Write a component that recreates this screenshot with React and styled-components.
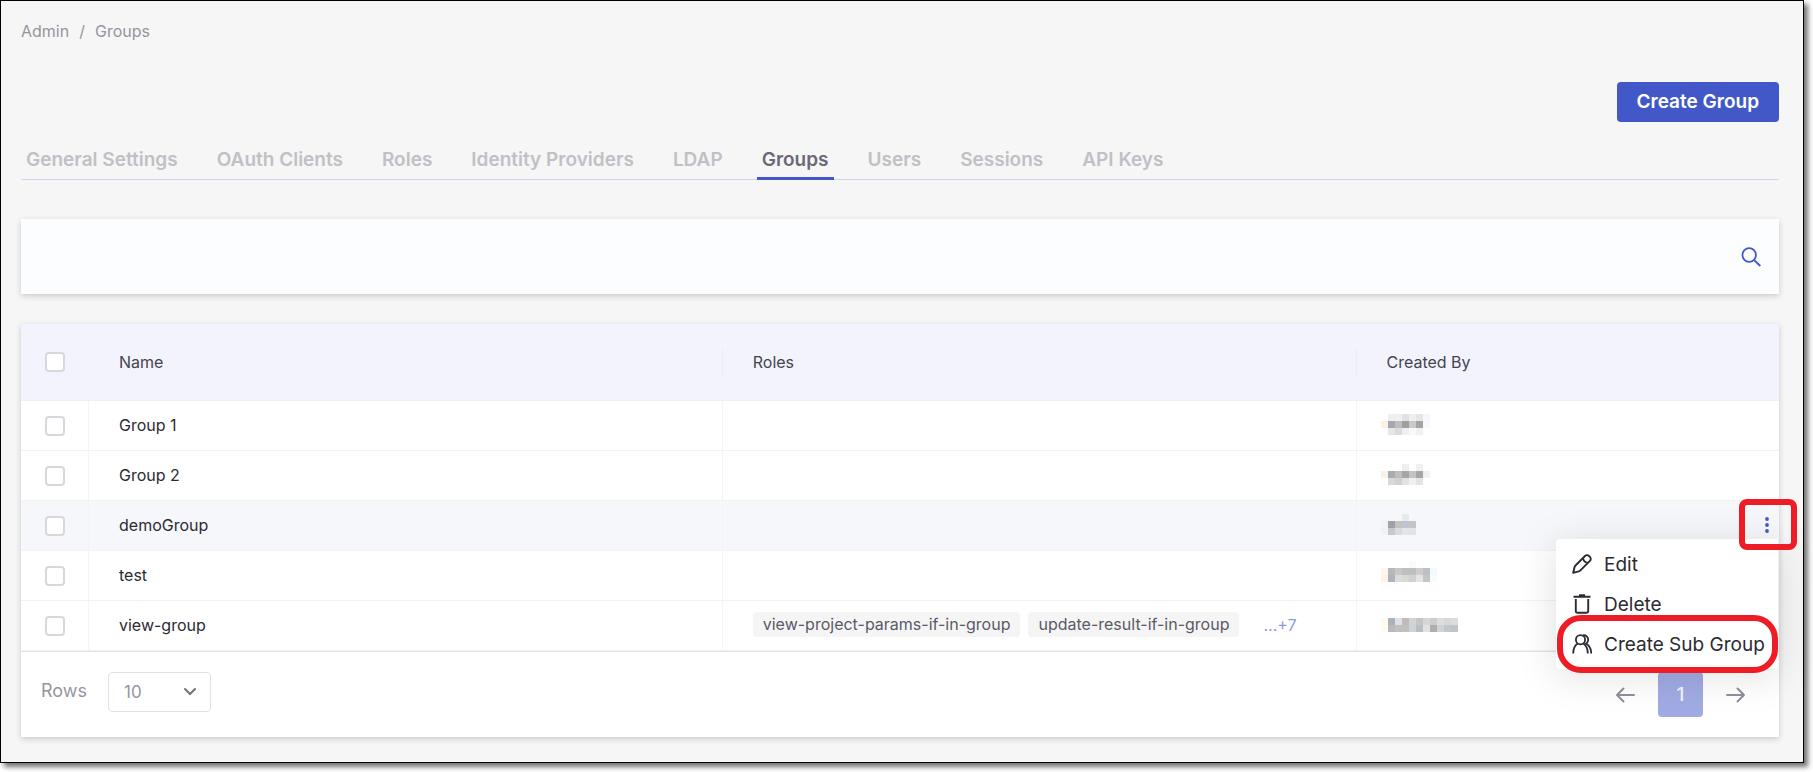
import { useState } from "react";
import styled, { createGlobalStyle } from "styled-components";

const GlobalStyle = createGlobalStyle`
  *, *::before, *::after {
    box-sizing: border-box;
  }

  body {
    margin: 0;
    background: #ffffff;
    font-family: Inter, "Liberation Sans", sans-serif;
    font-size: 16px;
    color: #2c2b33;
  }

  button, input, select {
    font-family: inherit;
  }
`;

const Page = styled.main`
  margin: 0 9px 9px 0;
  padding: 19px 24px 25px 20px;
  background: #f6f6f6;
  border: 1px solid #000000;
  box-shadow: 4px 4px 5px rgba(0, 0, 0, 0.55);
`;

const Breadcrumb = styled.nav`
  display: flex;
  gap: 10px;
  line-height: 22px;
  color: #96959f;
`;

const Crumb = styled.a`
  color: inherit;
  text-decoration: none;
`;

const Toolbar = styled.div`
  display: flex;
  justify-content: flex-end;
  margin-top: 40px;
`;

const PrimaryButton = styled.button`
  height: 40px;
  padding: 0 20px 2px;
  border: none;
  border-radius: 4px;
  background: #4358c8;
  color: #ffffff;
  font-size: 19px;
  font-weight: 600;
  cursor: pointer;
`;

const Tabs = styled.nav`
  display: flex;
  gap: 29px;
  margin-top: 25px;
  border-bottom: 1px solid #d0d5ec;
`;

const Tab = styled.a`
  margin-bottom: -1px;
  padding: 0 5px 4px;
  border-bottom: 3px solid ${(p) => (p.$active ? "#4358c8" : "transparent")};
  color: ${(p) => (p.$active ? "#6b6976" : "#c1c0c6")};
  font-size: 19px;
  font-weight: 600;
  line-height: 26px;
  text-decoration: none;
  white-space: nowrap;
`;

const SearchBar = styled.form`
  display: flex;
  align-items: center;
  height: 75px;
  margin-top: 39px;
  padding: 0 18px;
  background: #fcfdff;
  box-shadow: 0 2px 6px rgba(0, 0, 0, 0.18);
`;

const SearchInput = styled.input`
  flex: 1;
  height: 40px;
  border: none;
  outline: none;
  background: transparent;
  font-size: 16px;
`;

const IconButton = styled.button`
  display: flex;
  align-items: center;
  justify-content: center;
  width: ${(p) => p.$width || 20}px;
  padding: 0;
  border: none;
  background: none;
  color: ${(p) => p.$color};
  cursor: pointer;
`;

const Card = styled.section`
  margin-top: 30px;
  background: #ffffff;
  box-shadow: 0 2px 6px rgba(0, 0, 0, 0.18);
`;

const Table = styled.table`
  display: block;
  width: 100%;

  thead, tbody {
    display: block;
  }
`;

const Row = styled.tr`
  display: grid;
  grid-template-columns: 68px 3fr 3fr 2fr;
  background: ${(p) => (p.$active ? "#f5f7fb" : "transparent")};
`;

const HeadRow = styled(Row)`
  height: 77px;
  background: #f2f3fc;
  border-bottom: 1px solid #f0f0f3;
`;

const HeadCell = styled.th`
  display: flex;
  align-items: center;
  padding: 0 0 0 ${(p) => (p.$check ? 24 : 30)}px;
  color: #45444f;
  font-weight: 400;
  line-height: 26px;
  text-align: left;
`;

/* short divider at the right edge of a header cell */
const HeadLabel = styled.span`
  flex: 1;
  border-right: 1px solid ${(p) => (p.$last ? "transparent" : "#ebebf1")};
`;

const Cell = styled.td`
  display: flex;
  align-items: center;
  min-width: 0;
  height: 50px;
  padding: ${(p) => (p.$check ? "0 0 0 24px" : "0 0 2px 30px")};
  border-right: ${(p) => (p.$last ? "none" : "1px solid #f4f4f6")};
  border-bottom: 1px solid #f2f2f4;
`;

const Checkbox = styled.input`
  appearance: none;
  width: 20px;
  height: 20px;
  margin: 0;
  border: 2px solid #d7d7dd;
  border-radius: 4px;
  background: #ffffff;
  cursor: pointer;

  &:checked {
    border-color: #4358c8;
    background: #4358c8;
  }
`;

const Chip = styled.span`
  margin-right: 8px;
  padding: 0 10px;
  border-radius: 4px;
  background: #f5f5f5;
  color: #5b5a66;
  line-height: 25px;
  white-space: nowrap;
`;

const MoreLink = styled.a`
  margin-left: 16px;
  color: #8c9ae0;
  text-decoration: none;
`;

const Actions = styled.div`
  position: relative;
  display: flex;
  align-self: stretch;
  margin-left: auto;
`;

const Ring = styled.span`
  position: absolute;
  z-index: 2;
  border: 6px solid #ee1c25;
  pointer-events: none;
`;

const KebabRing = styled(Ring)`
  inset: -2px -18px -2px -16px;
  border-radius: 8px;
`;

const ItemRing = styled(Ring)`
  inset: -9px 0 -9px 1px;
  border-radius: 24px;
`;

const Menu = styled.div`
  position: absolute;
  z-index: 1;
  top: 38px;
  right: 1px;
  width: 222px;
  padding: 5px 0;
  border-radius: 4px;
  background: #ffffff;
  box-shadow: 0 6px 40px rgba(0, 0, 0, 0.13);
`;

const MenuItem = styled.button`
  position: relative;
  display: flex;
  align-items: center;
  gap: 12px;
  width: 100%;
  height: 40px;
  padding: 0 0 0 16px;
  border: none;
  background: none;
  color: #2c2b33;
  font-size: 19px;
  white-space: nowrap;
  cursor: pointer;
`;

const Footer = styled.footer`
  display: flex;
  align-items: flex-start;
  justify-content: space-between;
  padding: 20px 33px 20px 20px;
  border-top: 1px solid #e2e2e4;
`;

const RowsPicker = styled.div`
  display: flex;
  gap: 21px;
`;

const RowsLabel = styled.label`
  color: #96959f;
  font-size: 18px;
  line-height: 38px;
`;

const SelectBox = styled.div`
  position: relative;
`;

const Select = styled.select`
  appearance: none;
  width: 103px;
  height: 40px;
  padding: 0 15px;
  border: 1px solid #e2e2e5;
  border-radius: 4px;
  background: #ffffff;
  color: #96959f;
  font-size: 17px;
`;

const SelectArrow = styled.svg`
  position: absolute;
  top: 14px;
  right: 14px;
  pointer-events: none;
`;

const Pager = styled.nav`
  display: flex;
  gap: 23px;
`;

const PageButton = styled.button`
  width: 45px;
  height: 45px;
  padding: 0;
  border: none;
  border-radius: 4px;
  background: #a1abe3;
  color: #f3f4fb;
  font-size: 19px;
  font-weight: 500;
`;

const SearchIcon = () => (
  <svg width="20" height="20" viewBox="0 0 20 20" fill="none" stroke="currentColor" strokeWidth="1.8">
    <circle cx="8.2" cy="8" r="6.8" />
    <path d="M13 13l6.3 6" />
  </svg>
);

const PencilIcon = () => (
  <svg width="20" height="20" viewBox="0 0 20 20" fill="none" stroke="currentColor" strokeWidth="1.9" strokeLinejoin="round">
    <path d="M1.2 18.8l1.3-5.6c.2-.7.5-1.2 1-1.7L13 2a2.8 2.8 0 0 1 4 0l.9.9a2.8 2.8 0 0 1 0 4l-9.5 9.5c-.5.5-1 .8-1.7 1z" />
    <path d="M11 4.200c.4 2.400 2 4.200 4.600 4.700" />
  </svg>
);

const TrashIcon = () => (
  <svg width="20" height="20" viewBox="0 0 20 20" fill="none" stroke="currentColor" strokeWidth="1.9">
    <path d="M1.5 2.8h17M7 1.3h6" />
    <path d="M3.8 5v12a1.8 1.8 0 0 0 1.8 1.8h8.8a1.8 1.8 0 0 0 1.8-1.8V5" />
  </svg>
);

const UsersIcon = () => (
  <svg width="20" height="20" viewBox="0 0 20 20" fill="none" stroke="currentColor" strokeWidth="1.8">
    <circle cx="8.5" cy="5.7" r="4.6" />
    <path d="M1.2 19.5c0-5 1.400-8 4.600-10M11.200 9.500c3.200 2 4.600 5 4.600 10" />
    <path d="M11 1.300c3.200-.4 5.200 1.700 5.200 4.400 0 1.500-.7 2.800-2 3.700 3.200 2 5 5.200 5 10.100" />
  </svg>
);

const KebabIcon = () => (
  <svg width="4" height="16" viewBox="0 0 4 16" fill="currentColor">
    <circle cx="2" cy="2" r="1.9" />
    <circle cx="2" cy="8" r="1.9" />
    <circle cx="2" cy="14" r="1.9" />
  </svg>
);

const ArrowIcon = ({ flip }) => (
  <svg
    width="20"
    height="16"
    viewBox="0 0 20 16"
    fill="none"
    stroke="currentColor"
    strokeWidth="2"
    strokeLinecap="round"
    strokeLinejoin="round"
  >
    <path d={flip ? "M2 8h17M8.5 1.5L2 8l6.5 6.5" : "M1 8h17M11.5 1.5L18 8l-6.5 6.5"} />
  </svg>
);

/* Masked user names: one string per line of blocks, "-" is an empty block. */
const BLOCK = 7;

const MASKS = {
  a: [
    "- efefef f0f0ef e0e2e5 efefef e5e5e5 f5f7fa",
    "fbf1e6 a5a8b3 bbbfbf a19fa0 c8cbcd a5a3a4 f7f9fc",
    "- e6e6e8 dedadb f0f0f3 f9f9f9 f1f1f1 -",
  ],
  b: [
    "- - - efefef - f0f0f0 -",
    "f9f2e9 a7aab1 bcbfbc a6a7a5 c1c4c4 a6a6a5 eff0f2",
    "fdfdfd d9d9dc d1d0ce e1e2e5 f1f1f1 e4e4e4 -",
  ],
  c: [
    "- - - e8e9ed -",
    "f2f3f4 9fa1a8 c5c3c1 bec4d1 c3c4c6",
    "f0f1f3 c3c8d1 d9dade e4e5ea e3e4e9",
  ],
  d: [
    "- - - - fafafa - - -",
    "fff6ec b5b9be c6c7c6 bec0c0 bdbfbf cfccc9 c1bfbf f3faff",
    "fff1e4 acb3c0 dadddc d8d8d6 cfd2d3 e5e4e1 c5c4c4 f6fbff",
    "fdfdfd fdfdfd - - - - - -",
  ],
  e: [
    "-",
    "fffaf0 acb0b9 dfe1e5 c0bcbc d0d4d5 c4c5c6 d6d7d8 d0cdc9 dcdee4 d8d8da dcdcdd",
    "fffbf3 b9b9bb bfc1c1 c3c0be cfd3d4 b8bdc2 e1e2e3 b4aeaa d4d3d3 c4c7c9 c1c4c6",
    "-",
  ],
};

const Mask = styled.svg`
  display: block;
  margin-left: -6px;
`;

function MaskedName({ mask }) {
  const lines = MASKS[mask].map((line) => line.split(" "));
  const width = Math.max(...lines.map((line) => line.length)) * BLOCK;
  return (
    <Mask width={width} height={lines.length * BLOCK} shapeRendering="crispEdges">
      {lines.map((line, y) =>
        line.map((color, x) =>
          color === "-" ? null : (
            <rect key={`${x}-${y}`} x={x * BLOCK} y={y * BLOCK} width={BLOCK} height={BLOCK} fill={`#${color}`} />
          )
        )
      )}
    </Mask>
  );
}

const tabs = [
  "General Settings",
  "OAuth Clients",
  "Roles",
  "Identity Providers",
  "LDAP",
  "Groups",
  "Users",
  "Sessions",
  "API Keys",
];

const groups = [
  { name: "Group 1", mask: "a" },
  { name: "Group 2", mask: "b" },
  { name: "demoGroup", mask: "c", active: true },
  { name: "test", mask: "d" },
  {
    name: "view-group",
    mask: "e",
    roles: ["view-project-params-if-in-group", "update-result-if-in-group"],
    more: 7,
  },
];

function GroupActions() {
  return (
    <Actions>
      <IconButton type="button" $width={24} $color="#4358c8" aria-label="Group actions">
        <KebabIcon />
      </IconButton>
      <KebabRing />
      <Menu>
        <MenuItem type="button">
          <PencilIcon />
          Edit
        </MenuItem>
        <MenuItem type="button">
          <TrashIcon />
          Delete
        </MenuItem>
        <MenuItem type="button">
          <UsersIcon />
          Create Sub Group
          <ItemRing />
        </MenuItem>
      </Menu>
    </Actions>
  );
}

export default function App() {
  const [rows, setRows] = useState("10");

  return (
    <>
      <GlobalStyle />
      <Page>
        <Breadcrumb aria-label="Breadcrumb">
          <Crumb href="#admin">Admin</Crumb>
          <span>/</span>
          <Crumb href="#groups">Groups</Crumb>
        </Breadcrumb>

        <Toolbar>
          <PrimaryButton type="button">Create Group</PrimaryButton>
        </Toolbar>

        <Tabs>
          {tabs.map((tab) => (
            <Tab key={tab} href="#" $active={tab === "Groups"}>
              {tab}
            </Tab>
          ))}
        </Tabs>

        <SearchBar onSubmit={(e) => e.preventDefault()}>
          <SearchInput type="text" aria-label="Search groups" />
          <IconButton type="submit" $color="#4358c8" aria-label="Search">
            <SearchIcon />
          </IconButton>
        </SearchBar>

        <Card>
          <Table>
            <thead>
              <HeadRow>
                <HeadCell $check>
                  <Checkbox type="checkbox" aria-label="Select all groups" />
                </HeadCell>
                <HeadCell>
                  <HeadLabel>Name</HeadLabel>
                </HeadCell>
                <HeadCell>
                  <HeadLabel>Roles</HeadLabel>
                </HeadCell>
                <HeadCell>
                  <HeadLabel $last>Created By</HeadLabel>
                </HeadCell>
              </HeadRow>
            </thead>
            <tbody>
              {groups.map((group) => (
                <Row key={group.name} $active={group.active}>
                  <Cell $check>
                    <Checkbox type="checkbox" aria-label={`Select ${group.name}`} />
                  </Cell>
                  <Cell>{group.name}</Cell>
                  <Cell>
                    {group.roles?.map((role) => (
                      <Chip key={role}>{role}</Chip>
                    ))}
                    {group.more && <MoreLink href="#roles">...+{group.more}</MoreLink>}
                  </Cell>
                  <Cell $last>
                    <MaskedName mask={group.mask} />
                    {group.active && <GroupActions />}
                  </Cell>
                </Row>
              ))}
            </tbody>
          </Table>

          <Footer>
            <RowsPicker>
              <RowsLabel htmlFor="rows">Rows</RowsLabel>
              <SelectBox>
                <Select id="rows" value={rows} onChange={(e) => setRows(e.target.value)}>
                  <option>10</option>
                  <option>25</option>
                  <option>50</option>
                </Select>
                <SelectArrow
                  width="14"
                  height="12"
                  viewBox="0 0 14 12"
                  fill="none"
                  stroke="#73727e"
                  strokeWidth="2"
                  strokeLinecap="round"
                >
                  <path d="M2 3l5 5 5-5" />
                </SelectArrow>
              </SelectBox>
            </RowsPicker>
            <Pager aria-label="Pagination">
              <IconButton type="button" $color="#908f9b" aria-label="Previous page">
                <ArrowIcon flip />
              </IconButton>
              <PageButton type="button">1</PageButton>
              <IconButton type="button" $color="#908f9b" aria-label="Next page">
                <ArrowIcon />
              </IconButton>
            </Pager>
          </Footer>
        </Card>
      </Page>
    </>
  );
}
